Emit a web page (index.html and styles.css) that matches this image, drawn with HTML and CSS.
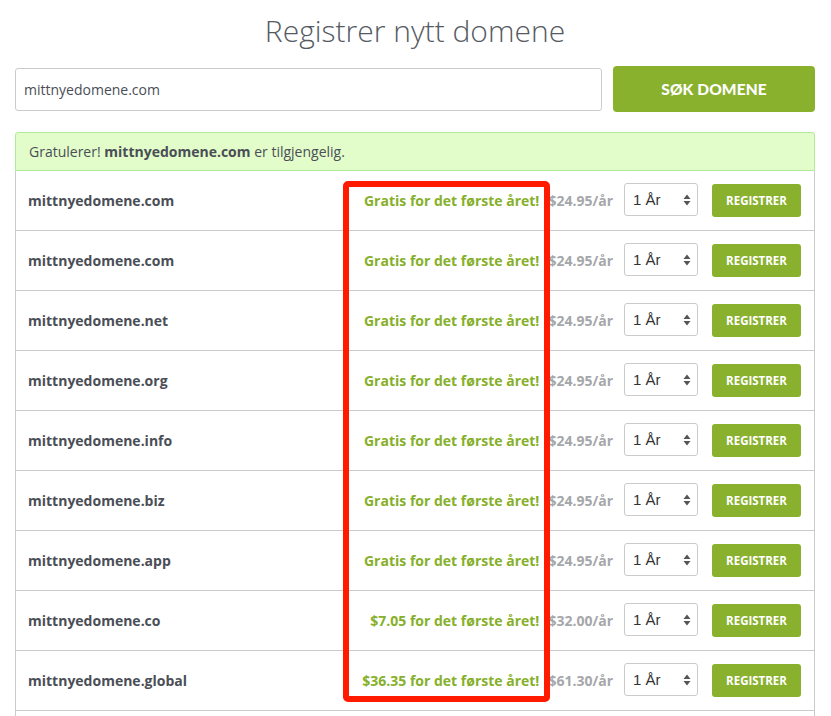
FILE: index.html
```html
<!DOCTYPE html>
<html lang="no">
<head>
<meta charset="utf-8">
<title>Registrer nytt domene</title>
<link rel="stylesheet" href="styles.css">
</head>
<body>
<div class="page">
  <h1 class="title">Registrer nytt domene</h1>
  <form class="search">
    <input class="search-input" type="text" value="mittnyedomene.com">
    <button class="search-btn" type="button">SØK DOMENE</button>
  </form>
  <div class="alert">Gratulerer! <b>mittnyedomene.com</b> er tilgjengelig.</div>
  <div class="results">
    <div class="row"><span class="domain">mittnyedomene.com</span><span class="promo">Gratis for det første året!</span><span class="price">$24.95/år</span><span class="select">1 År<svg class="arrows" width="8" height="12" viewBox="0 0 8 12"><path d="M4 0.5L7.5 5H0.5Z M4 11.5L0.5 7H7.5Z" fill="#555"/></svg></span><button class="reg" type="button">REGISTRER</button></div>
    <div class="row"><span class="domain">mittnyedomene.com</span><span class="promo">Gratis for det første året!</span><span class="price">$24.95/år</span><span class="select">1 År<svg class="arrows" width="8" height="12" viewBox="0 0 8 12"><path d="M4 0.5L7.5 5H0.5Z M4 11.5L0.5 7H7.5Z" fill="#555"/></svg></span><button class="reg" type="button">REGISTRER</button></div>
    <div class="row"><span class="domain">mittnyedomene.net</span><span class="promo">Gratis for det første året!</span><span class="price">$24.95/år</span><span class="select">1 År<svg class="arrows" width="8" height="12" viewBox="0 0 8 12"><path d="M4 0.5L7.5 5H0.5Z M4 11.5L0.5 7H7.5Z" fill="#555"/></svg></span><button class="reg" type="button">REGISTRER</button></div>
    <div class="row"><span class="domain">mittnyedomene.org</span><span class="promo">Gratis for det første året!</span><span class="price">$24.95/år</span><span class="select">1 År<svg class="arrows" width="8" height="12" viewBox="0 0 8 12"><path d="M4 0.5L7.5 5H0.5Z M4 11.5L0.5 7H7.5Z" fill="#555"/></svg></span><button class="reg" type="button">REGISTRER</button></div>
    <div class="row"><span class="domain">mittnyedomene.info</span><span class="promo">Gratis for det første året!</span><span class="price">$24.95/år</span><span class="select">1 År<svg class="arrows" width="8" height="12" viewBox="0 0 8 12"><path d="M4 0.5L7.5 5H0.5Z M4 11.5L0.5 7H7.5Z" fill="#555"/></svg></span><button class="reg" type="button">REGISTRER</button></div>
    <div class="row"><span class="domain">mittnyedomene.biz</span><span class="promo">Gratis for det første året!</span><span class="price">$24.95/år</span><span class="select">1 År<svg class="arrows" width="8" height="12" viewBox="0 0 8 12"><path d="M4 0.5L7.5 5H0.5Z M4 11.5L0.5 7H7.5Z" fill="#555"/></svg></span><button class="reg" type="button">REGISTRER</button></div>
    <div class="row"><span class="domain">mittnyedomene.app</span><span class="promo">Gratis for det første året!</span><span class="price">$24.95/år</span><span class="select">1 År<svg class="arrows" width="8" height="12" viewBox="0 0 8 12"><path d="M4 0.5L7.5 5H0.5Z M4 11.5L0.5 7H7.5Z" fill="#555"/></svg></span><button class="reg" type="button">REGISTRER</button></div>
    <div class="row"><span class="domain">mittnyedomene.co</span><span class="promo">$7.05 for det første året!</span><span class="price">$32.00/år</span><span class="select">1 År<svg class="arrows" width="8" height="12" viewBox="0 0 8 12"><path d="M4 0.5L7.5 5H0.5Z M4 11.5L0.5 7H7.5Z" fill="#555"/></svg></span><button class="reg" type="button">REGISTRER</button></div>
    <div class="row"><span class="domain">mittnyedomene.global</span><span class="promo">$36.35 for det første året!</span><span class="price">$61.30/år</span><span class="select">1 År<svg class="arrows" width="8" height="12" viewBox="0 0 8 12"><path d="M4 0.5L7.5 5H0.5Z M4 11.5L0.5 7H7.5Z" fill="#555"/></svg></span><button class="reg" type="button">REGISTRER</button></div>
    <div class="row"><span class="domain"></span></div>
  </div>
  <div class="highlight"></div>
</div>
</body>
</html>
```
FILE: styles.css
```css
* { box-sizing: border-box; }
html, body { margin: 0; padding: 0; background: #fff; }
body { font-family: "Open Sans", "Liberation Sans", sans-serif; color: #4a4e56; overflow: hidden; }
.page { position: relative; padding: 0 16px 0 15px; }
.title {
  margin: 0;
  padding-top: 11px;
  height: 66px;
  text-align: center;
  font-weight: 300;
  font-size: 30px;
  line-height: 40px;
  color: #555a62;
}
.search { display: flex; align-items: center; gap: 11px; height: 46px; margin: 0; }
.search-input {
  flex: 1;
  height: 43px;
  border: 1px solid #cbcbcb;
  border-radius: 3px;
  padding: 0 8px;
  font-family: "Open Sans", sans-serif;
  font-size: 14px;
  color: #4a4e56;
  outline: none;
}
.search-btn {
  width: 202px;
  height: 46px;
  border: 0;
  border-radius: 4px;
  background: #8ab12d;
  color: #fff;
  font-family: Lato, "Open Sans", sans-serif;
  font-weight: 900;
  font-size: 15.5px;
  letter-spacing: 0.1px;
  padding: 0;
  margin-bottom: 1px;
}
.alert {
  margin-top: 20px;
  height: 39px;
  background: #e2fcca;
  border: 1px solid #b3ea99;
  border-radius: 3px 3px 0 0;
  padding: 0 13px;
  font-size: 14px;
  line-height: 37px;
  color: #4a4e56;
}
.alert b { font-weight: 700; }
.results { border-left: 1px solid #cbcbcb; border-right: 1px solid #cbcbcb; }
.row {
  display: flex;
  align-items: center;
  height: 60px;
  border-bottom: 1px solid #cbcbcb;
  padding: 0 13px 0 12px;
}
.domain { flex: 1; min-width: 0; font-weight: 700; font-size: 14px; color: #4a4e56; }
.promo { flex-shrink: 0; white-space: nowrap; font-weight: 700; font-size: 14px; color: #86b02a; margin-bottom: 1px; }
.price { flex-shrink: 0; white-space: nowrap; margin-left: 9px; font-weight: 700; font-size: 14px; color: #a5a7aa; margin-bottom: 1px; }
.select {
  flex-shrink: 0;
  margin-left: 11px;
  width: 74px;
  height: 33px;
  border: 1px solid #cbcbcb;
  border-radius: 3px;
  display: flex;
  align-items: center;
  justify-content: space-between;
  padding: 0 6px 0 8px;
  font-family: "Liberation Sans", Arial, sans-serif;
  font-size: 15px;
  color: #333;
  margin-bottom: 2px;
}
.arrows { display: block; }
.reg {
  flex-shrink: 0;
  margin-left: 14px;
  width: 89px;
  height: 33px;
  border: 0;
  border-radius: 3px;
  background: #8ab12d;
  color: #fff;
  font-family: "Open Sans", sans-serif;
  font-weight: 700;
  font-size: 11.5px;
  padding: 0;
}
.highlight {
  position: absolute;
  left: 343px;
  top: 181px;
  width: 207px;
  height: 521px;
  border: 6px solid #ff1a00;
  border-radius: 5px;
  pointer-events: none;
}
```
